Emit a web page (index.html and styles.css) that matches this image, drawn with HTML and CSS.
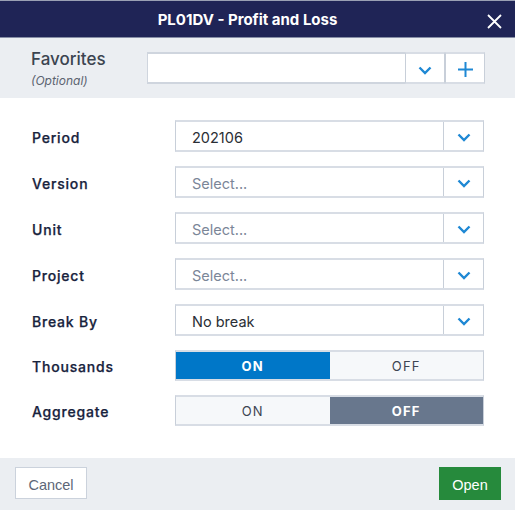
FILE: index.html
```html
<!DOCTYPE html>
<html>
<head>
<meta charset="utf-8">
<link rel="stylesheet" href="styles.css">
</head>
<body>
<div class="dialog">
  <div class="header">
    <div class="title">PL01DV - Profit and Loss</div>
    <svg class="close" width="15" height="15" viewBox="0 0 15 15"><path d="M1 1L14 14M14 1L1 14" stroke="#fff" stroke-width="1.8" fill="none"/></svg>
  </div>
  <div class="favs">
    <div class="fav-label">
      <div class="fav-title">Favorites</div>
      <div class="fav-opt">(Optional)</div>
    </div>
    <div class="fav-group">
      <div class="fav-input"></div>
      <div class="fav-btn"><svg width="14" height="9" viewBox="0 0 14 9"><path d="M1.5 1.5L7 7L12.5 1.5" stroke="#1e88d4" stroke-width="2.4" fill="none"/></svg></div>
      <div class="fav-btn plus"><svg width="15" height="15" viewBox="0 0 15 15"><path d="M7.5 0V15M0 7.5H15" stroke="#1e88d4" stroke-width="2" fill="none"/></svg></div>
    </div>
  </div>
  <div class="body">
    <div class="row">
      <div class="label">Period</div>
      <div class="select"><div class="value">202106</div><div class="caret"><svg width="14" height="9" viewBox="0 0 14 9"><path d="M1.5 1.5L7 7L12.5 1.5" stroke="#1e88d4" stroke-width="2.4" fill="none"/></svg></div></div>
    </div>
    <div class="row">
      <div class="label">Version</div>
      <div class="select"><div class="value placeholder">Select...</div><div class="caret"><svg width="14" height="9" viewBox="0 0 14 9"><path d="M1.5 1.5L7 7L12.5 1.5" stroke="#1e88d4" stroke-width="2.4" fill="none"/></svg></div></div>
    </div>
    <div class="row">
      <div class="label">Unit</div>
      <div class="select"><div class="value placeholder">Select...</div><div class="caret"><svg width="14" height="9" viewBox="0 0 14 9"><path d="M1.5 1.5L7 7L12.5 1.5" stroke="#1e88d4" stroke-width="2.4" fill="none"/></svg></div></div>
    </div>
    <div class="row">
      <div class="label">Project</div>
      <div class="select"><div class="value placeholder">Select...</div><div class="caret"><svg width="14" height="9" viewBox="0 0 14 9"><path d="M1.5 1.5L7 7L12.5 1.5" stroke="#1e88d4" stroke-width="2.4" fill="none"/></svg></div></div>
    </div>
    <div class="row">
      <div class="label">Break By</div>
      <div class="select"><div class="value">No break</div><div class="caret"><svg width="14" height="9" viewBox="0 0 14 9"><path d="M1.5 1.5L7 7L12.5 1.5" stroke="#1e88d4" stroke-width="2.4" fill="none"/></svg></div></div>
    </div>
    <div class="row toggle-row">
      <div class="label">Thousands</div>
      <div class="toggle"><div class="seg on-blue">ON</div><div class="seg">OFF</div></div>
    </div>
    <div class="row toggle-row">
      <div class="label">Aggregate</div>
      <div class="toggle"><div class="seg">ON</div><div class="seg on-gray">OFF</div></div>
    </div>
  </div>
  <div class="footer">
    <div class="btn cancel">Cancel</div>
    <div class="btn open">Open</div>
  </div>
</div>
</body>
</html>
```

FILE: styles.css
```css
html, body {
  margin: 0;
  padding: 0;
}
body {
  width: 515px;
  height: 510px;
  overflow: hidden;
  font-family: Inter, "Noto Sans", sans-serif;
  background: #ffffff;
}
.dialog {
  display: flex;
  flex-direction: column;
  height: 510px;
}
.header {
  height: 36px;
  background: #1f2456;
  border-top: 1px solid #9aa0b4;
  border-bottom: 1px solid #868ea6;
  display: flex;
  align-items: center;
  padding: 0 13px 0 8px;
}
.title {
  flex: 1;
  text-align: center;
  color: #ffffff;
  font-weight: 700;
  font-size: 15px;
  line-height: 20px;
  padding-top: 1px;
}
.close {
  display: block;
  margin-top: 4px;
}
.favs {
  height: 60px;
  background: #ebeef2;
  display: flex;
  padding-left: 31px;
}
.fav-label {
  width: 116px;
  padding-top: 11px;
}
.fav-title {
  font-size: 17px;
  line-height: 20px;
  font-weight: 500;
  color: #3b4450;
}
.fav-opt {
  font-size: 12px;
  line-height: 14px;
  font-style: italic;
  color: #5b6370;
  margin-top: 5px;
}
.fav-group {
  display: flex;
  margin-top: 14px;
  height: 32px;
}
.fav-input {
  width: 257px;
  background: #fff;
  border: 1px solid #cfd5de;
  border-width: 2px 1px 2px 1px;
  border-right: none;
}
.fav-btn {
  background: #fff;
  border: 1px solid #c8cfd9;
  border-top: 2px solid #d8dde5;
  border-bottom: 2px solid #d8dde5;
  display: flex;
  align-items: center;
  justify-content: center;
  padding-top: 4px;
  box-sizing: border-box;
  width: 40px;
}
.fav-btn.plus {
  padding-top: 2px;
}
.body {
  flex: 1;
  padding: 22px 31px 0 32px;
  display: flex;
  flex-direction: column;
  gap: 14px;
}
.row {
  display: flex;
  align-items: center;
  height: 32px;
}
.toggle-row {
  height: 31px;
}
.label {
  width: 143px;
  font-size: 14px;
  font-weight: 500;
  letter-spacing: 0.8px;
  color: #18233d;
  padding-top: 2px;
  -webkit-text-stroke: 0.25px #18233d;
}
.select {
  flex: 1;
  height: 32px;
  box-sizing: border-box;
  display: flex;
  background: #fff;
  border-style: solid;
  border-color: #d8dde5 #c8cfd9;
  border-width: 2px 1px;
}
.value {
  flex: 1;
  display: flex;
  align-items: center;
  padding-left: 16px;
  padding-top: 2px;
  font-size: 14.5px;
  color: #2a2e35;
  border-right: 1px solid #c8cfd9;
}
.value.placeholder {
  color: #7b8698;
}
.caret {
  width: 39px;
  display: flex;
  align-items: center;
  justify-content: center;
  padding-top: 2px;
}
.toggle {
  flex: 1;
  height: 31px;
  box-sizing: border-box;
  display: flex;
  border-style: solid;
  border-color: #d8dde5 #c8cfd9;
  border-width: 2px 1px;
  background: #f6f8fa;
}
.seg {
  flex: 1;
  display: flex;
  align-items: center;
  justify-content: center;
  font-size: 13px;
  letter-spacing: 1.2px;
  color: #3d4552;
}
.seg.on-blue {
  background: #0077c8;
  color: #fff;
  font-weight: 700;
}
.seg.on-gray {
  background: #68778d;
  color: #fff;
  font-weight: 700;
}
.footer {
  height: 52px;
  background: #ebeef2;
  display: flex;
  justify-content: space-between;
  align-items: flex-start;
  padding: 9px 14px 0 15px;
  box-sizing: border-box;
}
.btn {
  font-family: "Liberation Sans", Arial, sans-serif;
  font-size: 14.5px;
  display: flex;
  align-items: center;
  justify-content: center;
  box-sizing: border-box;
  padding-top: 3px;
}
.cancel {
  width: 72px;
  height: 32px;
  background: #fff;
  border: 1px solid #cbd2dc;
  color: #5d6778;
}
.open {
  width: 62px;
  height: 33px;
  background: #268a3c;
  color: #fff;
  font-weight: 500;
}
```
